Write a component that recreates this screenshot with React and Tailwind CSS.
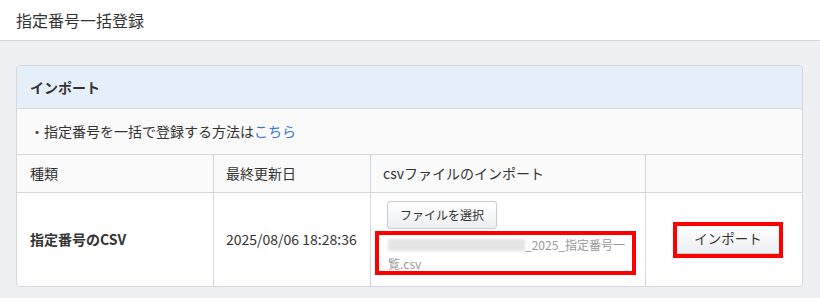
export default function App() {
  const font = { fontFamily: '"Noto Sans CJK JP", "Noto Sans", sans-serif' };
  return (
    <div className="w-[820px] h-[298px] bg-[#eff0f4] text-[#333]" style={font}>
      <div className="h-[41px] bg-white border-b border-[#d3d5d9] flex items-center px-4 text-[16px] leading-none">
        指定番号一括登録
      </div>
      <div className="pt-[24px] pl-4 pr-[17px]">
        <div className="border border-[#d4d7dc] rounded-[4px] overflow-hidden bg-white">
          <div className="h-[43px] bg-[#e5effa] border-b border-[#d4d7dc] flex items-center pl-[13px] text-[14px] font-bold">
            インポート
          </div>
          <div className="h-[46px] bg-[#fafafa] border-b border-[#d4d7dc] flex items-center pl-[13px] text-[14px]">
            ・指定番号を一括で登録する方法は<span className="text-[#3b78c8]">こちら</span>
          </div>
          <div className="grid grid-cols-[196px_157px_275px_1fr] text-[14px]">
            <div className="h-[38px] bg-[#fafafa] border-b border-[#d4d7dc] flex items-center pl-[13px]">種類</div>
            <div className="h-[38px] bg-[#fafafa] border-b border-l border-[#d4d7dc] flex items-center pl-[12px]">最終更新日</div>
            <div className="h-[38px] bg-[#fafafa] border-b border-l border-[#d4d7dc] flex items-center pl-[12px]">csvファイルのインポート</div>
            <div className="h-[38px] bg-[#fafafa] border-b border-l border-[#d4d7dc]"></div>

            <div className="h-[93px] flex items-center pl-[13px] font-bold">指定番号のCSV</div>
            <div className="h-[93px] border-l border-[#d4d7dc] flex items-center pl-[12px]">2025/08/06 18:28:36</div>
            <div className="h-[93px] border-l border-[#d4d7dc] pl-[4px] pt-[8px]">
              <button className="ml-[12px] h-[28px] px-[12px] text-[12px] leading-none rounded-[3px] border border-[#c8cbd0] bg-gradient-to-b from-[#ffffff] to-[#eceef1] text-[#333]">
                ファイルを選択
              </button>
              <div className="mt-[2px] w-[261px] h-[44px] border-[4px] border-[#ff0000] pl-[9px] text-[12px] leading-[19px] text-[#999]">
                <div className="flex items-center whitespace-nowrap">
                  <span className="inline-block w-[137px] h-[12px] bg-[#e4e4e4] blur-[1.5px]"></span>
                  <span>_2025_指定番号一</span>
                </div>
                <div>覧.csv</div>
              </div>
            </div>
            <div className="h-[93px] border-l border-[#d4d7dc] flex items-center pl-[27px]">
              <div className="w-[110px] h-[36px] border-[4px] border-[#ff0000] flex">
                <button className="flex-1 text-[13.5px] leading-none bg-gradient-to-b from-[#ffffff] to-[#eceef1] border-b border-[#c8cbd0] text-[#333]">
                  インポート
                </button>
              </div>
            </div>
          </div>
        </div>
      </div>
    </div>
  );
}
